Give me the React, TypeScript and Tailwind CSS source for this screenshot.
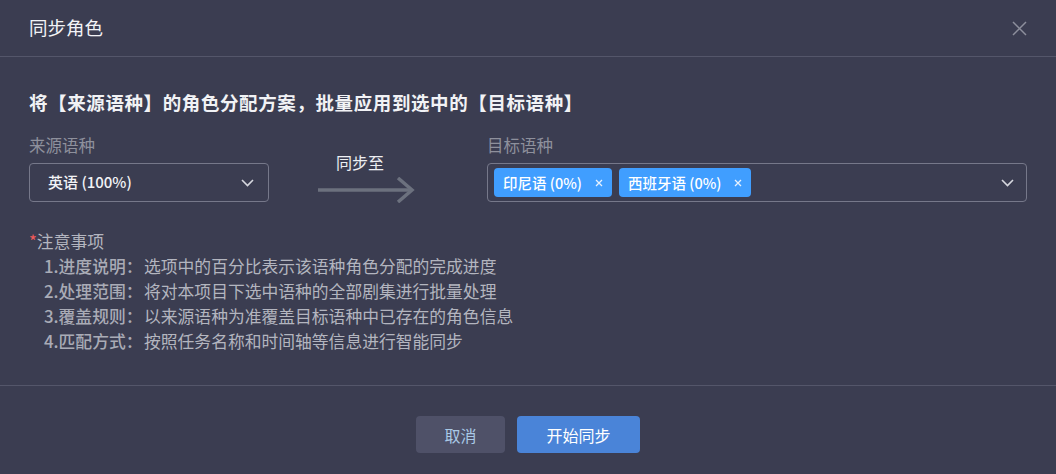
const font = { fontFamily: '"Noto Sans CJK SC", "Noto Sans", sans-serif' };

const notes = [
  ["1.进度说明：", "选项中的百分比表示该语种角色分配的完成进度"],
  ["2.处理范围：", "将对本项目下选中语种的全部剧集进行批量处理"],
  ["3.覆盖规则：", "以来源语种为准覆盖目标语种中已存在的角色信息"],
  ["4.匹配方式：", "按照任务名称和时间轴等信息进行智能同步"],
];

const Chevron = () => (
  <svg width="13" height="8" viewBox="0 0 13 8" fill="none">
    <path d="M1 1l5.5 5.5L12 1" stroke="#d6d7de" strokeWidth="1.6" />
  </svg>
);

const Tag = ({ label }: { label: string }) => (
  <span className="flex h-[29px] items-center gap-[13px] rounded-[4px] bg-[#409eff] pl-[9px] pr-[9px] text-[14.5px] font-medium text-white">
    {label}
    <svg width="8" height="8" viewBox="0 0 8 8" fill="none">
      <path d="M1 1l6 6M7 1L1 7" stroke="#e6f1ff" strokeWidth="1.3" />
    </svg>
  </span>
);

export default function App() {
  return (
    <div className="flex h-[474px] w-[1056px] flex-col bg-[#3b3d51] text-white" style={font}>
      {/* header */}
      <div className="flex h-[57px] shrink-0 items-center justify-between border-b border-[#54566a] pl-[29px] pr-[29px]">
        <span className="text-[18.5px] text-[#f2f3f6]">同步角色</span>
        <svg width="15" height="15" viewBox="0 0 15 15" fill="none">
          <path d="M1 1l13 13M14 1L1 14" stroke="#8d8f9c" strokeWidth="1.5" />
        </svg>
      </div>

      {/* body */}
      <div className="flex h-[329px] shrink-0 flex-col border-b border-[#54566a] px-[29px] pt-[32px]">
        <div className="text-[18.5px] font-bold leading-[26px] tracking-[0.6px] text-[#f1f2f5]">
          将【来源语种】的角色分配方案，批量应用到选中的【目标语种】
        </div>

        <div className="mt-[19px] flex items-start">
          <div className="flex w-[240px] flex-col">
            <span className="text-[16.5px] leading-[22px] text-[#8e909c]">来源语种</span>
            <div className="mt-[7px] flex h-[39px] items-center justify-between rounded-[4px] border border-[#76788a] pl-[18px] pr-[14px]">
              <span className="text-[15px] font-medium text-[#f2f3f6]">英语 (100%)</span>
              <Chevron />
            </div>
          </div>

          <div className="ml-[47px] flex w-[100px] flex-col items-center pt-[18px]">
            <span className="mr-[12px] text-[16px] leading-[20px] text-[#eceef2]">同步至</span>
            <svg className="mt-[5px]" width="100" height="26" viewBox="0 0 100 26" fill="none">
              <path d="M2 13h94" stroke="#6c717e" strokeWidth="3.5" />
              <path d="M82 1l14 12-14 12" stroke="#6c717e" strokeWidth="3.5" />
            </svg>
          </div>

          <div className="ml-[71px] flex flex-1 flex-col">
            <span className="text-[16.5px] leading-[22px] text-[#8e909c]">目标语种</span>
            <div className="mt-[7px] flex h-[39px] items-center justify-between rounded-[4px] border border-[#76788a] pl-[6px] pr-[12px]">
              <div className="flex gap-[7px]">
                <Tag label="印尼语 (0%)" />
                <Tag label="西班牙语 (0%)" />
              </div>
              <Chevron />
            </div>
          </div>
        </div>

        <div className="mt-[26px] flex flex-col text-[16.8px] leading-[25px] text-[#b3b5bf]">
          <div>
            <span className="text-[#f05a5a]">*</span>注意事项
          </div>
          {notes.map(([k, v]) => (
            <div key={k} className="flex pl-[15px]">
              <span className="w-[100px] font-medium text-[#a9abb6]">{k}</span>
              <span>{v}</span>
            </div>
          ))}
        </div>
      </div>

      {/* footer */}
      <div className="flex flex-1 justify-center gap-[12px] pt-[30px]">
        <button className="h-[37px] w-[89px] rounded-[4px] bg-[#4f5168] text-[16px] text-[#a9c9e6]">取消</button>
        <button className="h-[37px] w-[123px] rounded-[4px] bg-[#4a84d8] text-[16px] text-white">开始同步</button>
      </div>
    </div>
  );
}
